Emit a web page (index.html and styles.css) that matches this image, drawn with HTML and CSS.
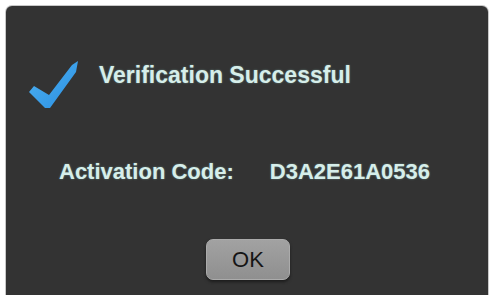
FILE: index.html
```html
<!DOCTYPE html>
<html>
<head>
<meta charset="utf-8">
<link rel="stylesheet" href="styles.css">
</head>
<body>
<div class="dialog">
  <div class="title-row">
    <svg class="check" width="50" height="50" viewBox="0 0 50 50">
      <defs>
        <linearGradient id="g" x1="0" y1="0" x2="1" y2="1">
          <stop offset="0" stop-color="#4fb2f2"/>
          <stop offset="1" stop-color="#2a8fe2"/>
        </linearGradient>
      </defs>
      <polygon points="0,32 5,26 20,35 43,5 49,1 47,12 21,48 16,48" fill="url(#g)"/>
    </svg>
    <div class="title">Verification Successful</div>
  </div>
  <div class="code-row">
    <span class="label">Activation Code:</span>
    <span class="code">D3A2E61A0536</span>
  </div>
  <div class="actions">
    <button class="ok">OK</button>
  </div>
</div>
</body>
</html>
```
FILE: styles.css
```css
html, body {
  margin: 0;
  padding: 0;
  background: #ffffff;
}
body {
  width: 490px;
  height: 295px;
  overflow: hidden;
  padding: 6px 0 0 6px;
  box-sizing: border-box;
}
.dialog {
  width: 482px;
  height: 289px;
  background: #333333;
  border-radius: 6px 6px 0 0;
  box-shadow: 0 0 0 1px #c8c8c8;
  display: flex;
  flex-direction: column;
  font-family: "Liberation Sans", Arial, sans-serif;
}
.title-row {
  display: flex;
  align-items: flex-start;
  padding: 54px 0 0 23px;
  gap: 20px;
}
.check {
  display: block;
  flex: none;
}
.title {
  margin-top: 4px;
  font-size: 23px;
  line-height: 23px;
  font-weight: bold;
  color: #d6eeea;
  text-shadow: 0 0 2px rgba(170, 235, 225, 0.45);
  white-space: nowrap;
}
.code-row {
  display: flex;
  margin-top: 51px;
  padding-left: 53px;
  gap: 36px;
  font-size: 22px;
  line-height: 22px;
  font-weight: bold;
  color: #d6eeea;
  text-shadow: 0 0 2px rgba(170, 235, 225, 0.45);
  white-space: nowrap;
}
.actions {
  display: flex;
  justify-content: center;
  margin-top: 56px;
  padding-left: 2px;
}
.ok {
  width: 84px;
  height: 41px;
  border: 1px solid #ababab;
  border-radius: 7px;
  background: linear-gradient(#a2a2a2, #8f8f8f);
  box-shadow: 0 2px 3px #1c1c1c;
  font-family: "Liberation Sans", Arial, sans-serif;
  font-size: 22px;
  color: #151515;
  padding: 0;
}
```
